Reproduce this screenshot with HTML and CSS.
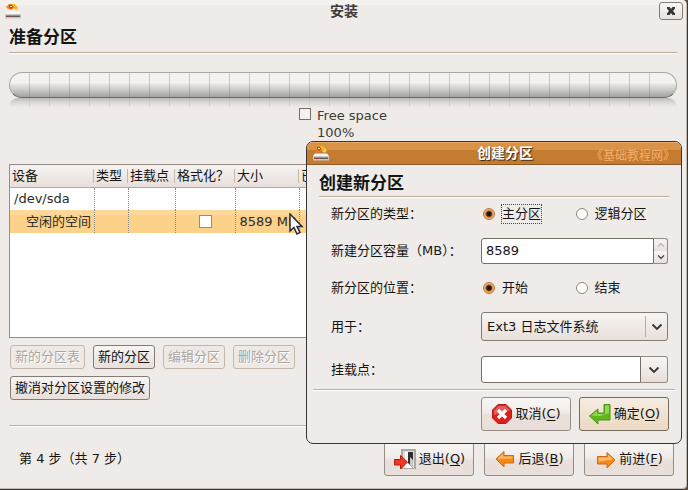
FILE: index.html
```html
<!DOCTYPE html>
<html lang="zh-CN">
<head>
  <meta charset="UTF-8" />
  <meta name="viewport" content="width=device-width, initial-scale=1.0"/>
  <title>安装</title>
  <link rel="stylesheet" href="styles.css">
</head>
<body>

  <svg class="icon-defs" aria-hidden="true">
    <symbol id="installer" viewBox="0 0 16 16">
      <path d="M8 1.500c3 .3 5.500 2 5.500 4.500l-2 2-3-2.500z" fill="#f9cf7c"/>
      <path d="M1 4l3-3h4l4 3-1 2-2-1-3 2-3-1z" fill="#f08a1c"/>
      <path d="M4 2h3l1 2-2 2-2-2z" fill="#d92b14"/>
      <path d="M7 1h3l2 3-1 2-3-3z" fill="#e9c51c"/>
      <path d="M5 3h2v1H5z" fill="#fff"/>
      <path d="M2 8.500h12l2 2.500H0z" fill="#f6f6f4"/>
      <path d="M0 11h16v4.500H0z" fill="#c9c8c4"/>
      <path d="M1 12.500h14v1.500H1z" fill="#5d5a56"/>
      <path d="M5 13h2v1H5zM10 13h1v1h-1z" fill="#c33"/>
    </symbol>
    <symbol id="chevron" viewBox="0 0 12 8">
      <path d="M1.500 1.500L6 6l4.500-4.500" fill="none" stroke="currentColor" stroke-width="1.800"/>
    </symbol>
  </svg>

  <main class="window">
    <header class="titlebar">
      <svg class="app-icon"><use href="#installer"/></svg>
      <span class="window-title">安装</span>
      <button type="button" class="close-button" aria-label="关闭">
        <svg width="10" height="10" viewBox="0 0 10 10"><path d="M1 1h2.500L5 3l1.500-2H9v1.500L7 5l2 2.500V9H6.500L5 7 3.500 9H1V7.500L3 5 1 2.500z" fill="#38342f"/></svg>
      </button>
    </header>

    <div class="content">
      <h1>准备分区</h1>

      <div class="disk-bar"></div>
      <div class="disk-reflection"></div>
      <div class="legend">
        <span class="legend-swatch"></span>
        <div class="legend-text">Free space<br>100%</div>
      </div>

      <div class="tree">
        <table>
          <colgroup>
            <col class="col-device"><col class="col-type"><col class="col-mount"><col class="col-format"><col class="col-size"><col>
          </colgroup>
          <thead>
            <tr><th>设备</th><th>类型</th><th>挂载点</th><th>格式化？</th><th>大小</th><th>已用</th></tr>
          </thead>
          <tbody>
            <tr><td>/dev/sda</td><td></td><td></td><td></td><td></td><td></td></tr>
            <tr class="selected">
              <td class="child">空闲的空间</td><td></td><td></td>
              <td class="format-cell"><input type="checkbox" aria-label="格式化"></td>
              <td>8589 MB</td><td></td>
            </tr>
          </tbody>
        </table>
      </div>

      <div class="actions">
        <button type="button" class="small-button" disabled>新的分区表</button>
        <button type="button" class="small-button">新的分区</button>
        <button type="button" class="small-button" disabled>编辑分区</button>
        <button type="button" class="small-button" disabled>删除分区</button>
      </div>
      <div class="actions">
        <button type="button" class="small-button">撤消对分区设置的修改</button>
      </div>

      <footer class="footer">
        <span class="step">第 4 步（共 7 步）</span>
        <button type="button" class="big-button">
          <svg width="24" height="24" viewBox="0 0 24 24">
            <path d="M8 2h15v20H8z" fill="#aaa9a4"/>
            <path d="M10 4h11v17H10z" fill="#dededb"/>
            <path d="M12 5h8v16h-8z" fill="#fafafa"/>
            <path d="M15 5h5v16l-5-5z" fill="#302f2d"/>
            <path d="M17 10l3 3v8l-3-3z" fill="#c9c8c5"/>
            <path d="M1.500 12.500h6v-4l7 6.500-7 7v-4h-6z" fill="#ee3a22" stroke="#b51c10"/>
          </svg>
          <span>退出(<u>Q</u>)</span>
        </button>
        <button type="button" class="big-button">
          <svg width="22" height="22" viewBox="0 0 22 22">
            <path d="M2 11l8-7.500v4h9.500v7.500H10v4z" fill="#f68b13" stroke="#c86a10"/>
            <path d="M3.500 11L9 5.500v3h9.500v2z" fill="#fbb571"/>
          </svg>
          <span>后退(<u>B</u>)</span>
        </button>
        <button type="button" class="big-button">
          <svg width="22" height="22" viewBox="0 0 22 22">
            <path d="M20 12l-8-7.500v4H2.500v7.500H12v4z" fill="#f68b13" stroke="#c86a10"/>
            <path d="M18 11.500L13 6.500v3H3.500v4z" fill="#fbb571"/>
          </svg>
          <span>前进(<u>F</u>)</span>
        </button>
      </footer>
    </div>
  </main>

  <svg class="pointer" width="16" height="24" viewBox="0 0 16 24">
    <path d="M2 1v17l4-3.500 3 6.500 3-1.500-3-6h5z" fill="#fff" stroke="#2b2b33" stroke-width="1.500"/>
  </svg>

  <section class="dialog" role="dialog" aria-labelledby="dialogTitle">
    <header class="dialog-titlebar">
      <svg class="app-icon"><use href="#installer"/></svg>
      <span class="dialog-title" id="dialogTitle">创建分区</span>
      <span class="watermark">《基础教程网》</span>
    </header>

    <form class="dialog-body">
      <h2>创建新分区</h2>

      <div class="fields">
        <span>新分区的类型：</span>
        <div class="radio-group">
          <label class="focused"><input type="radio" name="type" checked><span>主分区</span></label>
          <label><input type="radio" name="type"><span>逻辑分区</span></label>
        </div>

        <label for="size">新建分区容量（MB）：</label>
        <div class="combo spin">
          <input type="text" id="size" value="8589">
          <div class="spin-buttons">
            <button type="button" aria-label="增加" disabled><svg class="flip" width="8" height="6"><use href="#chevron"/></svg></button>
            <button type="button" aria-label="减少"><svg width="8" height="6"><use href="#chevron"/></svg></button>
          </div>
        </div>

        <span>新分区的位置：</span>
        <div class="radio-group">
          <label><input type="radio" name="place" checked><span>开始</span></label>
          <label><input type="radio" name="place"><span>结束</span></label>
        </div>

        <label for="usage">用于：</label>
        <div class="select-box">
          <select id="usage">
            <option>Ext3 日志文件系统</option>
          </select>
          <span class="select-arrow"><svg width="12" height="8"><use href="#chevron"/></svg></span>
        </div>

        <label for="mount">挂载点：</label>
        <div class="combo">
          <input type="text" id="mount">
          <button type="button" class="combo-arrow" aria-label="选择挂载点"><svg width="12" height="8"><use href="#chevron"/></svg></button>
        </div>
      </div>
    </form>

    <footer class="dialog-footer">
      <button type="button" class="big-button">
        <svg width="22" height="22" viewBox="0 0 22 22">
          <path d="M7 1.500h8L20.500 7v8L15 20.500H7L1.500 15V7z" fill="#d8201f" stroke="#b81818"/>
          <path d="M7.500 3h7L19 7.500 3 12V7.500z" fill="#e2605c"/>
          <path d="M7 7l8 8M15 7l-8 8" stroke="#fff" stroke-width="3.200"/>
        </svg>
        <span>取消(<u>C</u>)</span>
      </button>
      <button type="button" class="big-button default">
        <svg width="24" height="24" viewBox="0 0 24 24">
          <path d="M1.500 14L10 7v4h6V2.500h6V18H10v4z" fill="#62b619" stroke="#4a9410"/>
          <path d="M3.500 13.500L9 9v3h8V3.500h4V11l-9 3z" fill="#8fd65a"/>
        </svg>
        <span>确定(<u>O</u>)</span>
      </button>
    </footer>
  </section>

</body>
</html>
```

FILE: styles.css
```css
* {
  box-sizing: border-box;
}

body {
  margin: 0;
  background: #6b4a30;
  color: #141412;
  font-family: "DejaVu Sans", "Noto Sans CJK SC", sans-serif;
  font-size: 13px;
  line-height: 18px;
}

button,
input,
select {
  font: inherit;
  color: inherit;
  margin: 0;
}

.icon-defs {
  display: none;
}

.window {
  display: flex;
  flex-direction: column;
  min-height: 100vh;
  background: linear-gradient(#f3f2ee 5px, #efebe8 5px);
  border-right: 1px solid #3a3531;
  border-bottom: 1px solid #3a3531;
  border-radius: 0 5px 5px 0;
  box-shadow: inset -1px -1px #c3bcb5;
}

.titlebar {
  display: grid;
  grid-template-columns: 24px 1fr 24px;
  align-items: center;
  height: 24px;
  padding: 2px 4px 4px 5px;
}

.app-icon {
  width: 16px;
  height: 16px;
}

.window-title {
  font-size: 14px;
  font-weight: bold;
  color: #3c3b37;
  text-align: center;
}

.close-button {
  display: flex;
  align-items: center;
  justify-content: center;
  height: 18px;
  padding: 0;
  background: linear-gradient(#f8f7f5, #e9e2de);
  border: 1px solid #857d74;
  border-radius: 3px;
}

.content {
  flex: 1;
  display: flex;
  flex-direction: column;
  padding: 0 10px 13px 9px;
}

h1,
h2 {
  margin: 0;
  font-size: 17px;
  line-height: 26px;
  border-bottom: 1px solid #b9a998;
  box-shadow: 0 1px #fff;
}

h1 {
  padding-bottom: 2px;
}

/* disk usage bar, one tick every 20px */
.disk-bar {
  height: 26px;
  margin-top: 19px;
  border: 1px solid #a9a9a3;
  border-bottom-color: #6f6a62;
  border-radius: 13px;
  background:
    repeating-linear-gradient(90deg, transparent 0 19px, rgba(120, 120, 112, 0.35) 19px 20px) 0 0 / calc(100% - 16px) 100% no-repeat,
    linear-gradient(#f3f2ee 42%, #eae4e1 46%, #d6d5d1 62%, #bcbcb8 80%, #a3a4a0);
}

.disk-reflection {
  height: 9px;
  border-radius: 13px 13px 0 0;
  background:
    repeating-linear-gradient(90deg, transparent 0 19px, rgba(120, 120, 112, 0.15) 19px 20px) 1px 0 / calc(100% - 18px) 100% no-repeat,
    linear-gradient(#b9b9b5, #d6d3d0 40%, #efebe8);
}

.legend {
  display: flex;
  justify-content: center;
  gap: 6px;
  color: #3c3b37;
  line-height: 17px;
}

.legend-swatch {
  width: 12px;
  height: 12px;
  margin-top: 1px;
  border: 1px solid #756f66;
  background: #f3f2ee;
}

.tree {
  flex: 1;
  margin-top: 23px;
  background: #fff;
  border: 1px solid #978c84;
}

.tree table {
  width: 100%;
  table-layout: fixed;
  border-collapse: collapse;
}

.col-device { width: 84px; }
.col-type { width: 34px; }
.col-mount { width: 47px; }
.col-format { width: 60px; }
.col-size { width: 64px; }

.tree th {
  height: 22px;
  padding: 0 2px;
  font-weight: normal;
  text-align: left;
  white-space: nowrap;
  background:
    linear-gradient(#c5b8aa, #c5b8aa) right / 1px 14px no-repeat,
    linear-gradient(#f5f3f1, #e8dfdb);
  border-bottom: 1px solid #b9a998;
}

.tree td {
  height: 23px;
  padding: 0 4px;
  color: #2c2b28;
  white-space: nowrap;
  border-right: 1px dotted #8d8a86;
}

.tree td:last-child {
  border-right: 0;
}

.tree .selected {
  background: linear-gradient(#fdd898 5px, #fcd189 5px);
}

.tree .child {
  padding-left: 16px;
  padding-right: 0;
}

.tree .format-cell {
  text-align: center;
}

.tree input {
  appearance: none;
  display: block;
  width: 13px;
  height: 13px;
  margin: 0 auto;
  background: #fff;
  border: 1px solid #978c84;
}

.actions {
  display: flex;
  gap: 8px;
  margin: 7px 0 0 1px;
}

.small-button {
  height: 24px;
  padding: 0 4px;
  background: linear-gradient(#f7f5f3, #f0ebe8 45%, #e8dfdb);
  border: 1px solid #857b72;
  border-radius: 3px;
  line-height: 20px;
}

.small-button:disabled {
  color: #aba59f;
  text-shadow: 1px 1px #fff;
  background: #efe9e6;
  border-color: #c4b8ac;
}

.footer {
  display: flex;
  align-items: center;
  gap: 10px;
  margin-top: 25px;
  padding: 16px 3px 0 10px;
  border-top: 1px solid #b9b0a6;
  box-shadow: inset 0 1px #fff;
}

.step {
  flex: 1;
}

.big-button {
  display: flex;
  align-items: center;
  justify-content: center;
  gap: 2px;
  width: 90px;
  height: 34px;
  padding: 0;
  background: linear-gradient(#f8f7f5, #f0ebe8 45%, #e9e0db 55%, #e8dfda);
  border: 1px solid #978c84;
  border-radius: 3px;
  white-space: nowrap;
}

.big-button u {
  text-underline-offset: 2px;
}

.big-button.default {
  background: linear-gradient(#f5ede3, #f0e3d2 45%, #ebdac3);
  border-color: #746b5c;
}

.pointer {
  position: absolute;
  left: 288px;
  top: 213px;
}

.dialog {
  position: absolute;
  top: 141px;
  right: 6px;
  width: 376px;
  background: #efebe8;
  border: 1px solid #3a3531;
  border-radius: 7px;
  overflow: hidden;
}

.dialog-titlebar {
  position: relative;
  display: flex;
  align-items: center;
  height: 23px;
  padding-left: 6px;
  background: linear-gradient(#d99347 8px, #c37c30 8px);
  border-bottom: 1px solid #8a5a2a;
  box-shadow: inset 0 1px #e9ab68;
}

.dialog-title {
  flex: 1;
  font-size: 14px;
  font-weight: bold;
  color: #fff;
  text-align: center;
  text-shadow: 1px 1px 1px #3a2a18;
}

.watermark {
  position: absolute;
  top: 5px;
  right: 6px;
  font-size: 12px;
  color: #f6ac6a;
}

.dialog-body {
  padding: 5px 12px 0;
}

.fields {
  display: grid;
  grid-template-columns: 150px minmax(0, 1fr);
  align-items: center;
  row-gap: 15px;
  padding: 8px 1px 6px 12px;
  white-space: nowrap;
}

.radio-group {
  display: grid;
  grid-template-columns: 1fr 1fr;
  padding-left: 2px;
}

.radio-group label {
  display: flex;
  align-items: center;
  gap: 7px;
}

.radio-group input {
  appearance: none;
  width: 12px;
  height: 12px;
  background: #fff;
  border: 1px solid #8e877f;
  border-radius: 50%;
}

.radio-group input:checked {
  background: radial-gradient(circle, #1c1610 0 2px, #fbab5c 4px);
  border-color: #b8743e;
}

.focused span {
  outline: 1px dotted #4c463e;
}

.combo {
  display: flex;
  height: 27px;
}

.combo.spin {
  height: 26px;
}

.combo input {
  flex: 1;
  min-width: 0;
  padding: 0 4px;
  background: #fff;
  border: 1px solid #766d64;
  border-radius: 3px 0 0 3px;
}

.combo button {
  display: flex;
  align-items: center;
  justify-content: center;
  padding: 0;
  background: linear-gradient(#f7f5f3, #e8dfdb);
  border: 1px solid #978c84;
  border-left: 0;
  color: #38342f;
}

.combo .combo-arrow {
  width: 27px;
  border-radius: 0 3px 3px 0;
}

.spin-buttons {
  display: flex;
  flex-direction: column;
  width: 14px;
}

.spin-buttons button {
  flex: 1;
  border-top: 0;
  border-radius: 0 0 3px 0;
}

.spin-buttons button:first-child {
  border-top: 1px solid #978c84;
  border-bottom: 0;
  border-radius: 0 3px 0 0;
  color: #b8b0a8;
}

.flip {
  transform: rotate(180deg);
}

.select-box {
  display: grid;
  align-items: center;
}

.select-box > * {
  grid-area: 1 / 1;
}

.select-box select {
  appearance: none;
  height: 29px;
  padding: 0 28px 0 5px;
  background: linear-gradient(#f7f5f3, #f0ebe8 45%, #e8dfdb);
  border: 1px solid #857b72;
  border-radius: 3px;
}

.select-arrow {
  display: flex;
  align-items: center;
  justify-content: center;
  justify-self: end;
  width: 23px;
  height: 21px;
  border-left: 1px solid #b9a998;
  color: #38342f;
  pointer-events: none;
}

.dialog-footer {
  display: flex;
  justify-content: flex-end;
  gap: 8px;
  margin: 0 6px;
  padding: 7px 6px 12px;
  border-top: 1px solid #b9b0a6;
  box-shadow: inset 0 1px #fff;
}
```
